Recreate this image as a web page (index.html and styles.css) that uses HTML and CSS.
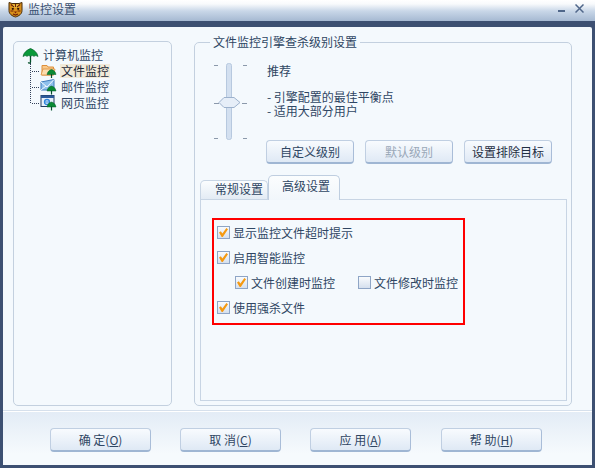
FILE: index.html
```html
<!DOCTYPE html>
<html lang="zh">
<head>
<meta charset="utf-8">
<title>监控设置</title>
<link rel="stylesheet" href="styles.css">
</head>
<body>
<div class="window">
  <header class="titlebar">
    <svg class="tiger" width="15" height="17" viewBox="0 0 15 17">
      <path d="M1 1.500l3 1h7l3-1v8c0 3.500-3 5.500-6.500 6.500C4 15 1 13 1 9.500z" fill="#d9901a" stroke="#4a2c0a"/>
      <path d="M4 3.500h7v3H4z" fill="#f4d24a"/>
      <path d="M3 3.500l3 2.500M12 3.500L9 6M7.500 3v3M2.500 10h3M9.500 10h3M5 13l2.500 1 2.500-1" stroke="#6e1f08" stroke-width="1.200" fill="none"/>
      <circle cx="4.800" cy="7.800" r="1.100" fill="#2b1206"/><circle cx="10.200" cy="7.800" r="1.100" fill="#2b1206"/>
      <path d="M6 10.500h3l-1.500 2z" fill="#7a1f08"/>
    </svg>
    <span class="title">监控设置</span>
    <span class="min"></span>
    <svg class="close" width="9" height="9" viewBox="0 0 9 9"><path d="M.5.500l8 8M8.500.500l-8 8" stroke="#50678a" stroke-width="1.500"/></svg>
  </header>
  <div class="client">
    <main class="main">
      <aside class="tree">
        <div class="node root">
          <svg width="17" height="17" viewBox="0 0 17 17"><path d="M1 9.500C2 5 5 3 8.500 1.500 12 3 15 5 16 9.500c-2-1.200-3-1.200-4 0-1-1.200-2.200-1.200-3.500 0-1.300-1.200-2.500-1.200-3.500 0-1-1.200-2-1.200-4 0z" fill="#0a9a3a" stroke="#04602a" stroke-width=".7"/><path d="M8.500 9v6c0 1.500-2 1.500-2 .2" fill="none" stroke="#04502a" stroke-width="1.300"/></svg>
          <span>计算机监控</span>
        </div>
        <ul class="children">
          <li class="node child">
            <svg width="17" height="16" viewBox="0 0 17 16"><path d="M2 2.500h5l1 1.500h5.500v8H2z" fill="#f9c98a" stroke="#dd8f3c"/><path d="M1 12l2-6h12l-1.500 6z" fill="#fcdcae" stroke="#dd8f3c" stroke-width=".8"/><path d="M7 11.500c.5-3 2.500-4.500 4.500-5 2 .5 4 2 4.500 5z" fill="#0a8a34" stroke="#045c28" stroke-width=".5"/><path d="M11.500 11v4" stroke="#04502a" stroke-width="1.200"/></svg>
            <span class="selected">文件监控</span>
          </li>
          <li class="node child">
            <svg width="17" height="16" viewBox="0 0 17 16"><path d="M1 3l13-2.500v10.500H1z" fill="#8fc0ec" stroke="#3f7cbc"/><path d="M1 3l6 5 7-7.500M1 11l5-4" fill="none" stroke="#f2f8fe"/><path d="M7 12c.5-3 2.500-4.500 4.500-5 2 .5 4 2 4.500 5z" fill="#0a8a34" stroke="#045c28" stroke-width=".5"/><path d="M11.500 11.500v4" stroke="#04502a" stroke-width="1.200"/></svg>
            <span>邮件监控</span>
          </li>
          <li class="node child">
            <svg width="17" height="16" viewBox="0 0 17 16"><rect x="1" y=".5" width="13" height="11" fill="#e8f0fa" stroke="#203a60"/><path d="M1 .5h13V3H1z" fill="#2c5a9a"/><circle cx="7" cy="7" r="2.500" fill="none" stroke="#2f86dc" stroke-width="1.300"/><path d="M4.500 7h5" stroke="#2f86dc"/><path d="M7 12c.5-3 2.500-4.500 4.500-5 2 .5 4 2 4.500 5z" fill="#0a8a34" stroke="#045c28" stroke-width=".5"/><path d="M11.500 11.500v4" stroke="#04502a" stroke-width="1.200"/></svg>
            <span>网页监控</span>
          </li>
        </ul>
      </aside>
      <fieldset class="group">
        <legend class="legend">文件监控引擎查杀级别设置</legend>
        <div class="level">
          <svg class="slider" width="36" height="77" viewBox="0 0 36 77">
            <rect x="13.500" y=".500" width="5" height="76" rx="2" fill="#d3e0f0" stroke="#b7c9df"/>
            <path d="M1 2.500h4M30 2.500h4M1 40.500h5M29 40.500h5M1 75.500h4M30 75.500h4" stroke="#8b99ab"/>
            <path d="M6 39.500l5-5h10l6 5-6 5H11z" fill="#e6eef8" stroke="#9db2cd"/>
          </svg>
          <div class="desc">
            <p class="desc-title">推荐</p>
            <p class="desc-line">- 引擎配置的最佳平衡点</p>
            <p class="desc-line">- 适用大部分用户</p>
          </div>
        </div>
        <div class="level-actions">
          <button class="btn small" type="button">自定义级别</button>
          <button class="btn small off" type="button">默认级别</button>
          <button class="btn small dark" type="button">设置排除目标</button>
        </div>
        <div class="tabs">
          <span class="tab">常规设置</span>
          <span class="tab active">高级设置</span>
        </div>
        <section class="pane">
          <div class="redbox">
            <label class="row"><i class="check on"></i>显示监控文件超时提示</label>
            <label class="row"><i class="check on"></i>启用智能监控</label>
            <div class="row sub">
              <label class="pair first"><i class="check on"></i>文件创建时监控</label>
              <label class="pair"><i class="check"></i>文件修改时监控</label>
            </div>
            <label class="row"><i class="check on"></i>使用强杀文件</label>
          </div>
        </section>
      </fieldset>
    </main>
    <footer class="footer">
      <button class="btn big" type="button">确 定(<u>O</u>)</button>
      <button class="btn big" type="button">取 消(<u>C</u>)</button>
      <button class="btn big" type="button">应 用(<u>A</u>)</button>
      <button class="btn big last" type="button">帮 助(<u>H</u>)</button>
    </footer>
  </div>
</div>
</body>
</html>
```
FILE: styles.css
```css
* { box-sizing: border-box; }
html, body { margin: 0; padding: 0; }
body {
  width: 595px;
  height: 468px;
  overflow: hidden;
  font: 12px/14px "Noto Sans CJK SC", "Liberation Sans", sans-serif;
  color: #2f4663;
}
p, ul { margin: 0; padding: 0; list-style: none; }
.window {
  width: 595px;
  height: 468px;
  display: flex;
  flex-direction: column;
  background: #3d5072;
}
.titlebar {
  height: 21px;
  flex: none;
  display: flex;
  align-items: flex-start;
  padding-left: 8px;
  background: linear-gradient(#fff 0, #f8fafc 4px, #c9d7e8 11px, #a6b9d2 21px);
}
.tiger { margin-top: 1px; flex: none; }
.title { margin: 2px 0 0 5px; font-size: 12px; color: #3a5070; }
.min { width: 7px; height: 2px; background: #50678a; margin: 10px 0 0 auto; }
.close { margin: 4px 11px 0 10px; flex: none; }
.client {
  flex: 1;
  margin: 6px 3px 3px;
  display: flex;
  flex-direction: column;
  background: #f4f9fd;
  border-radius: 2px 2px 0 0;
  min-height: 0;
}
.main {
  height: 384px;
  flex: none;
  display: flex;
  gap: 22px;
  padding: 14px 0 0 10px;
  border-bottom: 1px solid #d6e0ec;
}
.tree {
  width: 159px;
  height: 365px;
  border: 1px solid #c3d0df;
  border-radius: 5px;
  padding: 4px 0 0 8px;
}
.node { display: flex; align-items: center; height: 16px; }
.root { gap: 4px; margin-top: 1px; }
.root svg { flex: none; }
.children { margin-left: 8px; border-left: 1px dotted #33415a; height: 40px; }
.child { padding-left: 1px; height: 16px; }
.child::before { content: ""; width: 7px; border-top: 1px dotted #33415a; flex: none; }
.child svg { flex: none; margin-left: 1px; }
.child span { margin-left: 3px; padding: 0 1px; }
.selected { background: #f1ead9; color: #1f2a38; }
.group {
  width: 378px;
  height: 371px;
  margin: -6px 0 0;
  padding: 0 4px 0 5px;
  border: 1px solid #c3d0df;
  border-radius: 5px;
  min-width: 0;
}
.legend { margin-left: 10px; padding: 0 3px; line-height: 14px; }
.level { display: flex; height: 77px; margin-top: 14px; }
.slider { margin: 0 0 0 13px; flex: none; }
.desc { margin-left: 18px; }
.desc-title { margin: 1px 0 12px; }
.desc-line { white-space: nowrap; }
.level-actions { display: flex; gap: 11px; margin-left: 66px; }
.btn {
  font: inherit;
  color: #2f4663;
  padding: 0;
  border: 1px solid #c0cfe2;
  border-bottom: 2px solid #9fb6d3;
  border-right-color: #a9bdd8;
  border-radius: 4px;
  background: linear-gradient(#f8fbfe, #dfe9f5);
}
.small { width: 88px; height: 24px; }
.dark { color: #1f2e42; }
.off { color: #9aa8b8; }
.tabs { display: flex; align-items: flex-end; height: 24px; margin-top: 11px; }
.tab {
  width: 68px;
  height: 19px;
  padding-left: 14px;
  line-height: 16px;
  border: 1px solid #c8d5e4;
  border-bottom: 0;
  border-radius: 5px 5px 0 0;
  background: linear-gradient(#fbfdfe, #e3ebf4);
}
.tab.active {
  width: 72px;
  height: 25px;
  padding-left: 13px;
  line-height: 19px;
  margin-bottom: -1px;
  position: relative;
  background: linear-gradient(#fbfdfe, #f1f6fb);
  border-color: #bfcee0;
}
.pane {
  height: 202px;
  border: 1px solid #c8d5e4;
  padding: 18px 0 0 11px;
}
.redbox {
  width: 253px;
  height: 107px;
  border: 2px solid #f00;
  padding: 0 0 0 3px;
}
.row { display: flex; align-items: center; height: 25px; white-space: nowrap; }
.sub { padding-left: 18px; }
.pair { display: flex; align-items: center; }
.first { width: 123px; }
.check {
  flex: none;
  width: 13px;
  height: 13px;
  margin-right: 3px;
  border: 1px solid #8ea5c6;
  background: linear-gradient(#f9fbfd, #d5e0ee);
  position: relative;
}
.check.on::after {
  content: "";
  position: absolute;
  left: 1px;
  top: 1px;
  width: 9px;
  height: 9px;
  background: #f59a12;
  clip-path: polygon(0 50%, 20% 35%, 38% 60%, 82% 0, 100% 15%, 42% 100%, 30% 100%);
}
.footer {
  flex: 1;
  display: flex;
  gap: 29px;
  padding: 16px 0 0 47px;
  background: linear-gradient(#e3ecf6, #f6fafd 42px);
  border-top: 1px solid #fff;
}
.big { width: 101px; height: 24px; }
.last { margin-left: 1px; }
.big u { text-underline-offset: 1px; }
```
